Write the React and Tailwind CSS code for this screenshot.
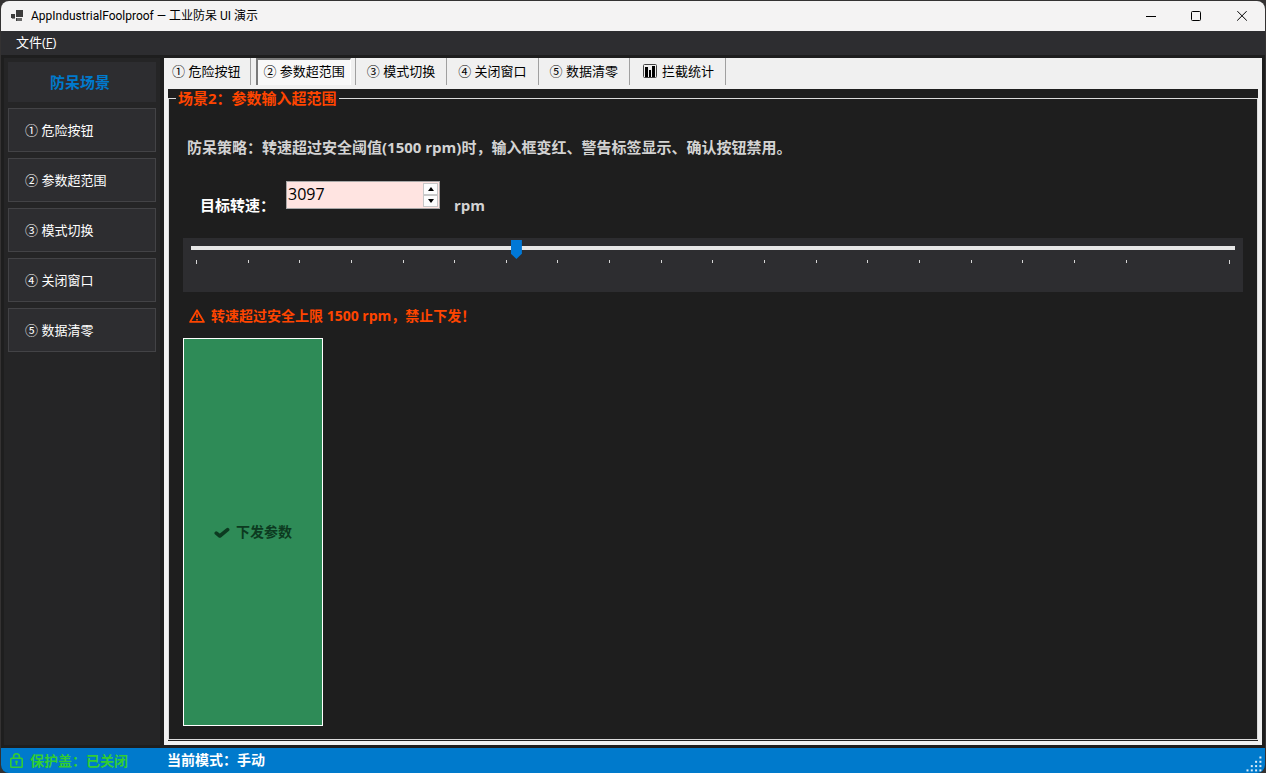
import { useState } from "react";

const SCENES = ["① 危险按钮", "② 参数超范围", "③ 模式切换", "④ 关闭窗口", "⑤ 数据清零"];
const LIMIT = 1500;
const TICKS = Array.from({ length: 21 }, (_, i) => i);

function AppIcon() {
  return (
    <svg width="13" height="12" viewBox="0 0 13 12" shapeRendering="crispEdges" aria-hidden="true">
      <rect x="5" y="0" width="7" height="7" fill="#3c3c3c" />
      <rect x="0" y="4" width="4" height="4" fill="#3c3c3c" />
      <rect x="1" y="8" width="3" height="1" fill="#8a8a8a" />
      <rect x="6" y="8" width="5" height="3" fill="#6a6a6a" />
      <rect x="5" y="8" width="1" height="3" fill="#3c3c3c" />
    </svg>
  );
}

function ChartIcon() {
  return (
    <svg width="14" height="14" viewBox="0 0 14 14" aria-hidden="true">
      <rect x="0.5" y="0.5" width="13" height="13" rx="1" fill="#f0f0f0" stroke="#444" />
      <rect x="2" y="3" width="3" height="10" fill="#000" />
      <rect x="6" y="6" width="2" height="7" fill="#000" />
      <rect x="9" y="2" width="3" height="11" fill="#000" />
    </svg>
  );
}

function LockIcon() {
  return (
    <svg width="13" height="15" viewBox="0 0 13 15" fill="none" stroke="#32cd32" aria-hidden="true">
      <rect x="0.8" y="5.3" width="11.4" height="8.9" rx="0.8" strokeWidth="1.6" />
      <path d="M3.6 5.2V3.7a2.9 2.9 0 0 1 5.8 0v1.5" strokeWidth="1.6" />
      <circle cx="6.5" cy="8.8" r="1.4" fill="#32cd32" stroke="none" />
      <path d="M6.5 9v3" strokeWidth="1.4" />
    </svg>
  );
}

function WarningIcon() {
  return (
    <svg width="16" height="14" viewBox="0 0 16 14" fill="none" stroke="#ff4500" aria-hidden="true">
      <path d="M8 1.2 14.9 12.9H1.1Z" strokeWidth="1.8" strokeLinejoin="round" />
      <path d="M8 4.6v4.2M8 10v1.6" strokeWidth="1.8" />
    </svg>
  );
}

function CheckIcon() {
  return (
    <svg width="16" height="12" viewBox="0 0 16 12" fill="none" aria-hidden="true">
      <path d="M2.3 7.2 5.8 10 13.6 3.6" stroke="#0c3a20" strokeWidth="3.6" strokeLinecap="round" strokeLinejoin="round" />
    </svg>
  );
}

function Grip() {
  const dots = [];
  for (let r = 0; r < 4; r++) for (let c = 3 - r; c < 4; c++) dots.push([c, r]);
  return (
    <svg width="16" height="16" viewBox="0 0 16 16" aria-hidden="true">
      {dots.map(([c, r]) => (
        <rect key={`${c}-${r}`} x={c * 4.3 + 0.5} y={r * 4.3 + 0.5} width="2" height="2" fill="#dcecf8" />
      ))}
    </svg>
  );
}

function TitleBar() {
  return (
    <header className="flex h-[30px] items-center bg-[#f4f3f3] pl-[10px] text-[12px] text-black">
      <AppIcon />
      <h1 className="ml-[7px] flex-1 font-[Roboto,'Noto_Sans_CJK_SC',sans-serif] leading-5">AppIndustrialFoolproof — 工业防呆 UI 演示</h1>
      <button aria-label="最小化" className="flex h-full w-[46px] items-center justify-center">
        <svg width="11" height="11" viewBox="0 0 11 11"><path d="M1 5.5h10" stroke="#000" /></svg>
      </button>
      <button aria-label="最大化" className="flex h-full w-[46px] items-center justify-center">
        <svg width="11" height="11" viewBox="0 0 11 11"><rect x="0.5" y="0.5" width="9" height="9" rx="1" fill="none" stroke="#000" /></svg>
      </button>
      <button aria-label="关闭" className="flex h-full w-[46px] items-center justify-center">
        <svg width="11" height="11" viewBox="0 0 11 11"><path d="M0.2 0l9.6 9.6M9.8 0l-9.6 9.6" stroke="#000" /></svg>
      </button>
    </header>
  );
}

function Sidebar() {
  return (
    <aside className="flex w-[156px] shrink-0 flex-col bg-[#252526] px-1 pt-1">
      <h2 className="flex h-10 items-center justify-center bg-[#2d2d30] pr-1 pb-px text-[15px] leading-5 font-semibold text-[#007acc]">
        防呆场景
      </h2>
      <nav className="mt-[6px] flex flex-col gap-[6px]">
        {SCENES.map((s) => (
          <button key={s} className="h-11 border border-[#434346] bg-[#2d2d30] pl-4 text-left text-[13px] leading-5 text-white">
            {s}
          </button>
        ))}
      </nav>
    </aside>
  );
}

function Tabs() {
  return (
    <div role="tablist" className="flex h-[27px] shrink-0 text-[13px] leading-5 text-black">
      {SCENES.map((s, i) =>
        i === 1 ? (
          <div key={s} className="flex border-r border-[#a0a0a0] pr-1 pl-[5px]">
            <button
              role="tab"
              aria-selected="true"
              className="border-t-2 border-r border-l-2 border-t-[#7a7a7a] border-r-white border-l-[#7a7a7a] bg-[#f8f8f8] px-[5px] pb-[3px] whitespace-nowrap"
            >
              {s}
            </button>
          </div>
        ) : (
          <button
            key={s}
            role="tab"
            aria-selected="false"
            className={`border-r border-[#a0a0a0] pb-[2px] whitespace-nowrap ${i === 0 ? "pr-[10px] pl-2" : "px-[11px]"}`}
          >
            {s}
          </button>
        )
      )}
      <button role="tab" aria-selected="false" className="flex items-center gap-[5px] border-r border-[#a0a0a0] pr-[11px] pb-[2px] pl-[13px] whitespace-nowrap">
        <ChartIcon />
        拦截统计
      </button>
    </div>
  );
}

function SpinButton({ label, path, onClick }) {
  return (
    <button aria-label={label} onClick={onClick} className="flex flex-1 items-center justify-center border border-[#c8c8c8] bg-[#fdfdfd]">
      <svg width="6" height="4" viewBox="0 0 6 4"><path d={path} fill="#000" /></svg>
    </button>
  );
}

function SpeedPanel() {
  const [speed, setSpeed] = useState(3097);
  const over = speed > LIMIT;
  const update = (v) => setSpeed(Math.min(10000, Math.max(0, Number(v))));
  return (
    <fieldset className="flex min-w-0 flex-1 flex-col border border-[#dcdcdc] px-[14px] pb-[13px]">
      <legend className="-ml-[7px] px-[2px] text-[15px] leading-[19px] font-bold text-[#ff4500]">场景2：参数输入超范围</legend>
      <p className="mt-[29px] ml-1 text-[15px] leading-5 font-bold text-[#d3d3d3]">
        防呆策略：转速超过安全阈值(1500 rpm)时，输入框变红、警告标签显示、确认按钮禁用。
      </p>
      <div className="mt-6 ml-[17px] flex h-[34px] items-end text-[15px] leading-5 font-bold">
        <label htmlFor="speed" className="w-[86px] text-white">目标转速：</label>
        <div className={`flex h-7 w-[154px] self-start border border-[#a8a8a8] p-px ${over ? "bg-[#ffe4e1]" : "bg-white"}`}>
          <input
            id="speed"
            type="number"
            value={speed}
            onChange={(e) => update(e.target.value)}
            className="min-w-0 flex-1 appearance-none bg-transparent pb-[2px] text-[16px] leading-5 font-normal text-black outline-none [&::-webkit-inner-spin-button]:appearance-none"
          />
          <div className="flex w-[15px] flex-col">
            <SpinButton label="增加" path="M3 0 6 4H0Z" onClick={() => update(speed + 1)} />
            <SpinButton label="减少" path="M3 4 6 0H0Z" onClick={() => update(speed - 1)} />
          </div>
        </div>
        <span className="ml-[14px] text-[#d3d3d3]">rpm</span>
      </div>
      <div className="mt-[23px] h-[54px] shrink-0 bg-[#2d2d30] px-2">
        <input
          type="range"
          aria-label="目标转速"
          min="0"
          max="10000"
          value={speed}
          onChange={(e) => update(e.target.value)}
          className="block h-5 w-full appearance-none bg-transparent [&::-webkit-slider-runnable-track]:h-1 [&::-webkit-slider-runnable-track]:bg-[#e7e7e7] [&::-webkit-slider-thumb]:-mt-[6px] [&::-webkit-slider-thumb]:h-[19px] [&::-webkit-slider-thumb]:w-[11px] [&::-webkit-slider-thumb]:appearance-none [&::-webkit-slider-thumb]:bg-[#0078d7] [&::-webkit-slider-thumb]:[clip-path:polygon(0_0,100%_0,100%_72%,50%_100%,0_72%)]"
        />
        <div className="mt-[2px] flex justify-between px-[5px]">
          {TICKS.map((t) => (
            <span key={t} className={`w-px ${t === 19 ? "" : "bg-[#d6d6d6]"} ${t === 0 || t === 20 ? "h-1" : "h-[3px]"}`} />
          ))}
        </div>
      </div>
      <p role="alert" className={`mt-[14px] ml-[6px] flex items-center gap-[6px] text-[14px] leading-5 font-bold text-[#ff4500] ${over ? "" : "invisible"}`}>
        <WarningIcon />
        转速超过安全上限 1500 rpm，禁止下发！
      </p>
      <button
        disabled={over}
        className="mt-3 flex w-[140px] flex-1 items-center justify-center gap-[6px] border border-white bg-[#2e8b57] text-[14px] leading-5 font-bold text-[#0c3a20]"
      >
        <CheckIcon />
        下发参数
      </button>
    </fieldset>
  );
}

export default function App() {
  return (
    <div className="flex min-h-screen flex-col bg-[#343232] px-px pt-px font-['Open_Sans','Noto_Sans_CJK_SC',sans-serif]">
      <div className="flex flex-1 flex-col overflow-hidden rounded-lg bg-[#1e1e1e]">
        <TitleBar />
        <div role="menubar" className="flex h-6 items-center bg-[#2d2d30] pb-[2px] pl-[15px] text-[13px] leading-5 text-white">
          <button role="menuitem">文件(<span className="underline">F</span>)</button>
        </div>
        <div className="flex flex-1 gap-1 p-[3px]">
          <Sidebar />
          <main className="flex min-w-0 flex-1 flex-col bg-[#f0f0f0]">
            <Tabs />
            <div className="mx-1 mt-1 mb-1 flex flex-1 flex-col bg-[#1e1e1e] pb-px">
              <SpeedPanel />
            </div>
          </main>
        </div>
        <footer className="flex h-[25px] items-center bg-[#007acc] pl-[9px] text-[14px] leading-5 font-semibold">
          <span className="flex w-[157px] items-center gap-[7px] text-[#32cd32]">
            <LockIcon />
            保护盖：已关闭
          </span>
          <span className="flex-1 pb-[2px] text-white">当前模式：手动</span>
          <span className="pt-[6px] pr-[3px]"><Grip /></span>
        </footer>
      </div>
    </div>
  );
}
